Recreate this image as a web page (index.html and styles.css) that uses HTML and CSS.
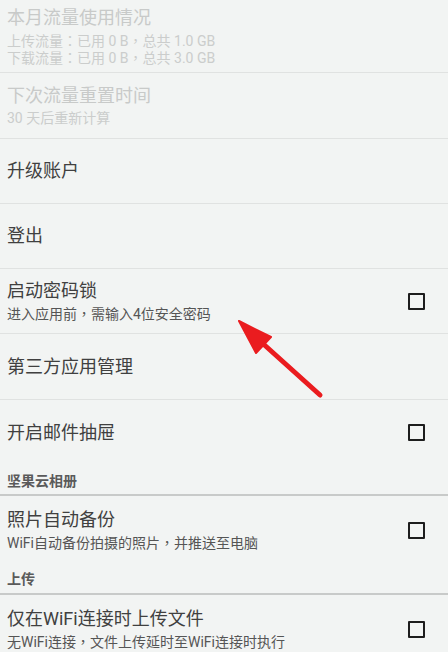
FILE: index.html
```html
<!DOCTYPE html>
<html lang="zh-CN">
<head>
<meta charset="utf-8">
<link rel="stylesheet" href="styles.css">
</head>
<body>
<div class="screen">
  <div class="pref first disabled">
    <div class="text">
      <div class="title">本月流量使用情况</div>
      <div class="sub">上传流量<span class="p" lang="zh-TW">：</span>已用 0 B<span class="p" lang="zh-TW">，</span>总共 1.0 GB</div>
      <div class="sub">下载流量<span class="p" lang="zh-TW">：</span>已用 0 B<span class="p" lang="zh-TW">，</span>总共 3.0 GB</div>
    </div>
  </div>
  <div class="pref r66 disabled">
    <div class="text">
      <div class="title">下次流量重置时间</div>
      <div class="sub">30 天后重新计算</div>
    </div>
  </div>
  <div class="pref">
    <div class="text"><div class="title">升级账户</div></div>
  </div>
  <div class="pref">
    <div class="text"><div class="title">登出</div></div>
  </div>
  <div class="pref">
    <div class="text">
      <div class="title">启动密码锁</div>
      <div class="sub">进入应用前<span class="p" lang="zh-TW">，</span>需输入4位安全密码</div>
    </div>
    <span class="check"></span>
  </div>
  <div class="pref r66">
    <div class="text"><div class="title">第三方应用管理</div></div>
  </div>
  <div class="pref noline">
    <div class="text"><div class="title">开启邮件抽屉</div></div>
    <span class="check"></span>
  </div>
  <div class="section s1">坚果云相册</div>
  <div class="pref tall noline">
    <div class="text">
      <div class="title">照片自动备份</div>
      <div class="sub">WiFi自动备份拍摄的照片<span class="p" lang="zh-TW">，</span>并推送至电脑</div>
    </div>
    <span class="check"></span>
  </div>
  <div class="section s2">上传</div>
  <div class="pref tall noline">
    <div class="text">
      <div class="title">仅在WiFi连接时上传文件</div>
      <div class="sub">无WiFi连接<span class="p" lang="zh-TW">，</span>文件上传延时至WiFi连接时执行</div>
    </div>
    <span class="check"></span>
  </div>

  <svg class="arrow" width="448" height="652" viewBox="0 0 448 652">
    <line x1="320" y1="395" x2="260" y2="341" stroke="#ea1c1f" stroke-width="5" stroke-linecap="round"/>
    <polygon points="239,321 271,337 256,353" fill="#ea1c1f" stroke="#ea1c1f" stroke-width="2" stroke-linejoin="round"/>
  </svg>
</div>
</body>
</html>
```

FILE: styles.css
```css
html, body {
  margin: 0;
  padding: 0;
  background: #f2f4f3;
}
body {
  font-family: Roboto, "Noto Sans CJK SC", sans-serif;
  color: #3c3c3c;
}
.screen {
  position: relative;
  width: 448px;
  height: 652px;
  overflow: hidden;
  background: #f2f4f3;
}
.pref {
  display: flex;
  align-items: center;
  box-sizing: border-box;
  height: 65px;
  padding: 0 23px 0 7px;
  border-bottom: 1px solid #e0e2e1;
}
.pref.first { height: 73px; }
.pref.r66 { height: 66px; }
.pref.noline { border-bottom: none; height: 65px; }
.pref.tall { height: 68px; }
.text {
  flex: 1;
  min-width: 0;
}
.title {
  font-size: 18px;
  line-height: 22px;
  color: #404040;
  white-space: nowrap;
}
.sub {
  font-size: 14px;
  line-height: 16px;
  margin-top: 3px;
  color: #555;
  white-space: nowrap;
}
.p {
  font-family: "Noto Sans CJK TC", sans-serif;
}
.first .sub + .sub { margin-top: 0; }
.disabled .title { color: #c8cac9; }
.disabled .sub { color: #cbcdcc; }
.check {
  width: 17px;
  height: 17px;
  box-sizing: border-box;
  border: 2px solid #1d1d1d;
  border-radius: 1px;
  flex: none;
}
.section {
  box-sizing: border-box;
  height: 31px;
  padding: 6px 7px 0;
  font-size: 14px;
  line-height: 20px;
  font-weight: bold;
  color: #5a5a5a;
  border-bottom: 2px solid #c8cac9;
}
.section.s2 { padding-top: 5px; }
.arrow {
  position: absolute;
  left: 0;
  top: 0;
  pointer-events: none;
}
```
